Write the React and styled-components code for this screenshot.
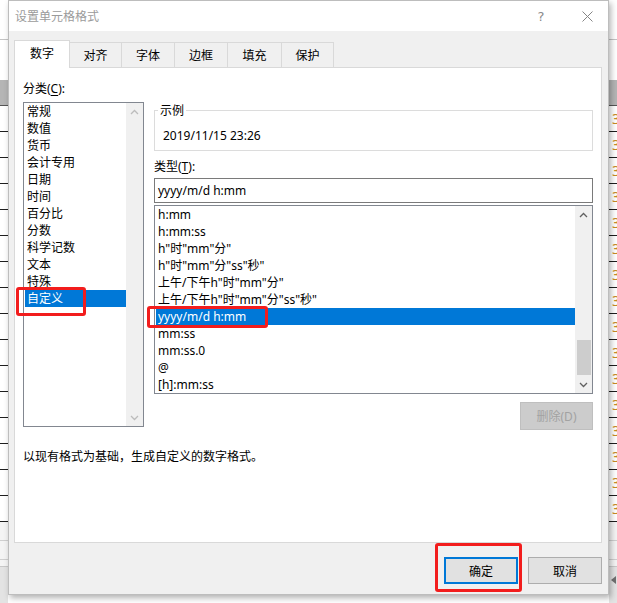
import styled, { createGlobalStyle } from "styled-components";

const GlobalStyle = createGlobalStyle`
  html, body {
    margin: 0;
    padding: 0;
    background: #ffffff;
  }
  body {
    font-family: "Noto Sans", "Noto Sans CJK SC", sans-serif;
    font-size: 12px;
    color: #000;
    overflow: hidden;
  }
`;

const categories = ["常规", "数值", "货币", "会计专用", "日期", "时间", "百分比", "分数", "科学记数", "文本", "特殊", "自定义"];

const formats = [
  "h:mm",
  "h:mm:ss",
  'h"时"mm"分"',
  'h"时"mm"分"ss"秒"',
  '上午/下午h"时"mm"分"',
  '上午/下午h"时"mm"分"ss"秒"',
  "yyyy/m/d h:mm",
  "mm:ss",
  "mm:ss.0",
  "@",
  "[h]:mm:ss",
];

const tabs = [
  { label: "数字", width: 56 },
  { label: "对齐", width: 53 },
  { label: "字体", width: 54 },
  { label: "边框", width: 54 },
  { label: "填充", width: 55 },
  { label: "保护", width: 53 },
];

const sheetRows = Array.from({ length: 16 }, (_, i) => i);

const Chevron = ({ up, color }) => (
  <svg width="9" height="6" viewBox="0 0 9 6">
    <polyline
      points={up ? "1,5 4.5,1.5 8,5" : "1,1 4.5,4.5 8,1"}
      fill="none"
      stroke={color}
      strokeWidth="1.3"
    />
  </svg>
);

const CloseIcon = () => (
  <svg width="11" height="11" viewBox="0 0 11 11">
    <path d="M0.5 0.5 L10.5 10.5 M10.5 0.5 L0.5 10.5" stroke="#858585" strokeWidth="1" />
  </svg>
);

// the spreadsheet peeking out on both sides of the dialog
const Sheet = ({ side }) => (
  <SheetStrip>
    <SheetTop />
    <SheetBlank />
    <SheetHeader />
    {sheetRows.map((i) => (
      <SheetRow key={i}>{side === "right" && <CellDigit>3</CellDigit>}</SheetRow>
    ))}
    <SheetLightRow />
    <SheetLightRow />
    <SheetGap />
    <SheetFooter>{side === "right" && <ScrollLeftArrow />}</SheetFooter>
  </SheetStrip>
);

const ListBox = ({ items, selected, height, thumb, arrowColor }) => (
  <ListFrame $height={height}>
    <ListItems>
      {items.map((item) => (
        <ListItem key={item} $selected={item === selected}>
          {item}
        </ListItem>
      ))}
    </ListItems>
    <Scrollbar>
      <ArrowBox>
        <Chevron up color={arrowColor} />
      </ArrowBox>
      <Track>{thumb && <Thumb />}</Track>
      <ArrowBox>
        <Chevron color={arrowColor} />
      </ArrowBox>
    </Scrollbar>
  </ListFrame>
);

export default function App() {
  return (
    <>
      <GlobalStyle />
      <Page>
        <Sheet side="left" />
        <Dialog>
          <TitleBar>
            <Title>设置单元格格式</Title>
            <Controls>
              <ControlButton>
                <HelpGlyph>?</HelpGlyph>
              </ControlButton>
              <ControlButton>
                <CloseIcon />
              </ControlButton>
            </Controls>
          </TitleBar>
          <Body>
            <TabRow>
              {tabs.map((tab, i) => (
                <Tab key={tab.label} $width={tab.width} $active={i === 0}>
                  {tab.label}
                </Tab>
              ))}
            </TabRow>
            <Panel>
              <Columns>
                <LeftCol>
                  <FieldLabel>
                    分类(<u>C</u>):
                  </FieldLabel>
                  <CategoryWrap>
                    <ListBox items={categories} selected="自定义" height={325} arrowColor="#bcbcbc" />
                  </CategoryWrap>
                </LeftCol>
                <RightCol>
                  <SampleBox>
                    <SampleLegend>示例</SampleLegend>
                    <SampleText>2019/11/15 23:26</SampleText>
                  </SampleBox>
                  <TypeLabel>
                    类型(<u>T</u>):
                  </TypeLabel>
                  <TypeInput>yyyy/m/d h:mm</TypeInput>
                  <TypeWrap>
                    <ListBox items={formats} selected="yyyy/m/d h:mm" height={189} thumb arrowColor="#606060" />
                  </TypeWrap>
                  <DeleteRow>
                    <DeleteButton>删除(D)</DeleteButton>
                  </DeleteRow>
                </RightCol>
              </Columns>
              <Description>以现有格式为基础，生成自定义的数字格式。</Description>
            </Panel>
            <Footer>
              <DialogButton $default>确定</DialogButton>
              <DialogButton>取消</DialogButton>
            </Footer>
          </Body>
        </Dialog>
        <Sheet side="right" />
        <Mark $x={16} $y={287} $w={70} $h={29} />
        <Mark $x={147} $y={306} $w={121} $h={22} />
        <Mark $x={435} $y={543} $w={87} $h={49} />
      </Page>
    </>
  );
}

const Page = styled.div`
  position: relative;
  display: flex;
  width: 617px;
  height: 603px;
  overflow: hidden;
  background: #ffffff;
`;

const SheetStrip = styled.div`
  width: 8px;
  flex: none;
  display: flex;
  flex-direction: column;
  overflow: hidden;
  background: #f7f7f7;
`;

const SheetTop = styled.div`
  height: 40px;
  box-sizing: border-box;
  border-bottom: 1px solid #c4c4c4;
  background: #ffffff;
`;

const SheetBlank = styled.div`
  height: 40px;
  background: #ffffff;
`;

const SheetHeader = styled.div`
  height: 26px;
  box-sizing: border-box;
  background: #b5b5b5;
  border-bottom: 1px solid #555;
`;

const SheetRow = styled.div`
  height: 26px;
  box-sizing: border-box;
  border-bottom: 1px solid #1e1e1e;
  padding-left: 3px;
  overflow: hidden;
  background: #ffffff;
`;

const CellDigit = styled.span`
  display: block;
  width: 5px;
  overflow: hidden;
  font-size: 14px;
  line-height: 25px;
  color: #c98a24;
`;

const SheetLightRow = styled.div`
  height: 19px;
  box-sizing: border-box;
  border-bottom: 1px solid #cfcfcf;
  background: #f4f4f4;
`;

const SheetGap = styled.div`
  height: 6px;
  background: #f4f4f4;
  border-bottom: 1px solid #c8c8c8;
`;

const SheetFooter = styled.div`
  flex: 1;
  background: #e3e3e3;
  display: flex;
  align-items: flex-start;
  padding-top: 9px;
  padding-left: 2px;
`;

const ScrollLeftArrow = styled.div`
  width: 0;
  height: 0;
  border-top: 4px solid transparent;
  border-bottom: 4px solid transparent;
  border-right: 5px solid #707070;
`;

const Dialog = styled.div`
  position: relative;
  z-index: 1;
  width: 601px;
  height: 595px;
  flex: none;
  box-sizing: border-box;
  border: 1px solid #bdbdbd;
  background: #f0f0f0;
  box-shadow: 2px 3px 6px rgba(0, 0, 0, 0.3);
  display: flex;
  flex-direction: column;
`;

const TitleBar = styled.div`
  height: 30px;
  flex: none;
  display: flex;
  align-items: center;
  padding-left: 6px;
  background: #ffffff;
`;

const Title = styled.div`
  color: #9b9b9b;
  font-size: 12px;
  line-height: 17px;
`;

const Controls = styled.div`
  margin-left: auto;
  display: flex;
  margin-right: -2px;
`;

const ControlButton = styled.div`
  width: 46px;
  height: 30px;
  display: flex;
  align-items: center;
  justify-content: center;
`;

const HelpGlyph = styled.span`
  font-family: "DejaVu Sans", sans-serif;
  font-size: 13px;
  color: #8a8a8a;
`;

const Body = styled.div`
  flex: 1;
  display: flex;
  flex-direction: column;
  padding: 9px 6px 10px 5px;
`;

const TabRow = styled.div`
  height: 27px;
  display: flex;
  align-items: flex-end;
`;

const Tab = styled.div`
  position: relative;
  z-index: ${(p) => (p.$active ? 1 : 0)};
  width: ${(p) => p.$width}px;
  height: ${(p) => (p.$active ? 28 : 25)}px;
  margin-bottom: ${(p) => (p.$active ? -1 : 0)}px;
  margin-left: -1px;
  &:first-child {
    margin-left: 0;
  }
  box-sizing: border-box;
  border: 1px solid #d9d9d9;
  border-bottom: none;
  background: ${(p) => (p.$active ? "#ffffff" : "#f0f0f0")};
  display: flex;
  align-items: center;
  justify-content: center;
  padding-bottom: ${(p) => (p.$active ? 2 : 0)}px;
  line-height: 17px;
`;

const Panel = styled.div`
  height: 476px;
  box-sizing: border-box;
  border: 1px solid #d9d9d9;
  background: #ffffff;
  padding: 12px 6px 0 8px;
  display: flex;
  flex-direction: column;
`;

const Columns = styled.div`
  display: grid;
  grid-template-columns: 121px 439px;
  column-gap: 10px;
  align-items: start;
`;

const LeftCol = styled.div`
  display: flex;
  flex-direction: column;
`;

const RightCol = styled.div`
  display: flex;
  flex-direction: column;
  padding-top: 22px;
`;

const FieldLabel = styled.div`
  line-height: 17px;
  u {
    text-decoration-thickness: 1px;
    text-underline-offset: 2px;
  }
`;

const CategoryWrap = styled.div`
  margin-top: 5px;
`;

const ListFrame = styled.div`
  height: ${(p) => p.$height}px;
  box-sizing: border-box;
  border: 1px solid #828790;
  background: #ffffff;
  display: flex;
`;

const ListItems = styled.div`
  flex: 1;
  min-width: 0;
  padding-left: 1px;
  display: flex;
  flex-direction: column;
`;

const ListItem = styled.div`
  height: 17px;
  line-height: 17px;
  padding-left: 2px;
  white-space: nowrap;
  background: ${(p) => (p.$selected ? "#0078d7" : "transparent")};
  color: ${(p) => (p.$selected ? "#ffffff" : "#000000")};
`;

const Scrollbar = styled.div`
  width: 17px;
  flex: none;
  background: #f0f0f0;
  display: flex;
  flex-direction: column;
`;

const ArrowBox = styled.div`
  height: 17px;
  flex: none;
  display: flex;
  align-items: center;
  justify-content: center;
`;

const Track = styled.div`
  flex: 1;
  display: flex;
  flex-direction: column;
  justify-content: flex-end;
`;

const Thumb = styled.div`
  height: 35px;
  margin: 0 1px 1px 2px;
  background: #cdcdcd;
`;

const SampleBox = styled.fieldset`
  margin: 0;
  min-width: 0;
  padding: 8px 8px 6px 8px;
  border: 1px solid #dcdcdc;
`;

const SampleLegend = styled.legend`
  padding: 0 2px;
  margin-left: -5px;
  line-height: 17px;
`;

const SampleText = styled.div`
  line-height: 17px;
`;

const TypeLabel = styled(FieldLabel)`
  margin-top: 7px;
`;

const TypeInput = styled.div`
  margin-top: 3px;
  height: 25px;
  box-sizing: border-box;
  border: 1px solid #7a7a7a;
  padding-left: 3px;
  line-height: 23px;
  background: #ffffff;
`;

const TypeWrap = styled.div`
  margin-top: 2px;
`;

const DeleteRow = styled.div`
  margin-top: 8px;
  display: flex;
  justify-content: flex-end;
`;

const DeleteButton = styled.div`
  width: 73px;
  height: 28px;
  box-sizing: border-box;
  border: 1px solid #bfbfbf;
  background: #cccccc;
  color: #a2a2a2;
  display: flex;
  align-items: center;
  justify-content: center;
`;

const Description = styled.div`
  margin-top: 18px;
  line-height: 17px;
`;

const Footer = styled.div`
  margin-top: 14px;
  display: flex;
  justify-content: flex-end;
  gap: 10px;
`;

const DialogButton = styled.div`
  width: 74px;
  height: 27px;
  box-sizing: border-box;
  border: ${(p) => (p.$default ? "2px solid #0078d7" : "1px solid #adadad")};
  background: #e1e1e1;
  display: flex;
  align-items: center;
  justify-content: center;
`;

const Mark = styled.div`
  position: absolute;
  z-index: 5;
  left: ${(p) => p.$x}px;
  top: ${(p) => p.$y}px;
  width: ${(p) => p.$w}px;
  height: ${(p) => p.$h}px;
  box-sizing: border-box;
  border: 3px solid #f21d1d;
  border-radius: 3px;
  pointer-events: none;
`;
